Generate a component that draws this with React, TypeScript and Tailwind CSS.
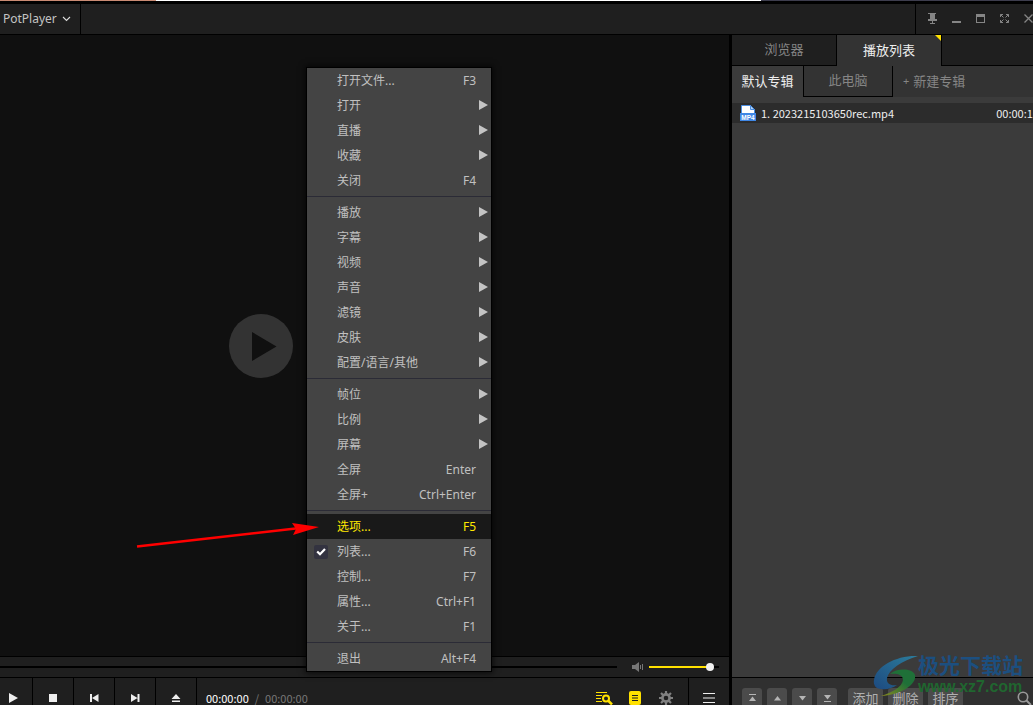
import React from "react";

type MenuItem = { label: string; keys?: string; sub?: boolean; checked?: boolean; selected?: boolean };

const groups: MenuItem[][] = [
  [
    { label: "打开文件...", keys: "F3" },
    { label: "打开", sub: true },
    { label: "直播", sub: true },
    { label: "收藏", sub: true },
    { label: "关闭", keys: "F4" },
  ],
  [
    { label: "播放", sub: true },
    { label: "字幕", sub: true },
    { label: "视频", sub: true },
    { label: "声音", sub: true },
    { label: "滤镜", sub: true },
    { label: "皮肤", sub: true },
    { label: "配置/语言/其他", sub: true },
  ],
  [
    { label: "帧位", sub: true },
    { label: "比例", sub: true },
    { label: "屏幕", sub: true },
    { label: "全屏", keys: "Enter" },
    { label: "全屏+", keys: "Ctrl+Enter" },
  ],
  [
    { label: "选项...", keys: "F5", selected: true },
    { label: "列表...", keys: "F6", checked: true },
    { label: "控制...", keys: "F7" },
    { label: "属性...", keys: "Ctrl+F1" },
    { label: "关于...", keys: "F1" },
  ],
  [{ label: "退出", keys: "Alt+F4" }],
];

function ContextMenu() {
  return (
    <div
      role="menu"
      className="absolute top-[68px] left-[307px] w-[184px] bg-[#444444] text-[#c0c0c0] shadow-[0_0_0_1px_#000,0_0_6px_2px_rgba(0,0,0,0.7)]"
    >
      {groups.map((items, g) => (
        <div key={g} role="group">
          {g > 0 && (
            <div className="flex h-[7px] items-center">
              <div className="h-px w-full bg-[#2b2b36]" />
            </div>
          )}
          {items.map((item) => (
            <button
              key={item.label}
              role="menuitem"
              className={
                "flex h-[25px] w-full items-center pr-[3px] text-left " +
                (item.selected ? "bg-[#191919] text-[#ffe800]" : "")
              }
            >
              <span className="flex w-[30px] pl-[7px]">
                {item.checked && (
                  <svg width="14" height="14" viewBox="0 0 14 14">
                    <rect width="14" height="14" rx="2" fill="#333340" />
                    <path d="M3.2 6.500l2.800 2.800L11 4.100" fill="none" stroke="#fff" strokeWidth="2.2" />
                  </svg>
                )}
              </span>
              <span className="flex-1 whitespace-nowrap">{item.label}</span>
              {item.keys && <span className="pr-3 whitespace-nowrap">{item.keys}</span>}
              {item.sub && (
                <svg width="9" height="12" viewBox="0 0 9 12">
                  <path d="M0 0v10l9-5z" fill="#c4c4c4" />
                </svg>
              )}
            </button>
          ))}
        </div>
      ))}
    </div>
  );
}

function TitleBar() {
  return (
    <header className="flex h-[31px] shrink-0 overflow-hidden border-b border-black bg-[#1f1f1f]">
      <button className="flex w-[81px] items-center gap-[5px] border-r border-black pb-px pl-[3px] text-[#c4c4c4]">
        PotPlayer
        <svg width="9" height="6" viewBox="0 0 9 6">
          <path d="M1 1l3.500 3.500L8 1" fill="none" stroke="#ddd" strokeWidth="1.100" />
        </svg>
      </button>
      <div className="flex-1" />
      <div className="-mr-2 flex w-[126px] items-center justify-between border-l border-black pr-[5px] pb-px pl-2">
        <button aria-label="置顶" className="flex w-4 justify-center">
          <svg width="10" height="12" viewBox="0 0 10 12">
            <path d="M1 0h8v1H8v5h2v2H6v2h2v1H3v-1h2V8H1V6h2V1H1z" fill="#858585" />
          </svg>
        </button>
        <button aria-label="最小化" className="flex w-4 justify-center pt-[7px]">
          <svg width="9" height="2"><rect width="9" height="2" fill="#858585" /></svg>
        </button>
        <button aria-label="最大化" className="flex w-4 justify-center">
          <svg width="9" height="9">
            <rect x=".5" y=".5" width="8" height="8" fill="none" stroke="#858585" />
            <rect width="9" height="3" fill="#858585" />
          </svg>
        </button>
        <button aria-label="全屏" className="flex w-4 justify-center">
          <svg width="9" height="9" viewBox="0 0 9 9">
            <path d="M.5 3V.5H3M6 .5h2.500V3M8.500 6v2.500H6M3 8.500H.5V6M.5 .5l3 3M8.500 .5l-3 3M8.500 8.500l-3-3M.5 8.500l3-3" fill="none" stroke="#858585" />
          </svg>
        </button>
        <button aria-label="关闭" className="flex w-4 justify-center">
          <svg width="9" height="9" viewBox="0 0 9 9">
            <path d="M.5 .5l8 8M8.500 .5l-8 8" stroke="#858585" strokeWidth="1.300" />
          </svg>
        </button>
      </div>
    </header>
  );
}

const transport = [
  { name: "播放", d: "M4 2l9 5-9 5z" },
  { name: "停止", d: "M3 3h8v8H3z" },
  { name: "上一个", d: "M3 3h2v8H3zM11.500 3v8L5 7z" },
  { name: "下一个", d: "M9.500 3h2v8h-2zM3 3v8l6.500-4z" },
  { name: "打开", d: "M7 3l4.500 5h-9zM3 9.500h8V11H3z" },
];

function Player() {
  return (
    <main className="flex min-w-0 flex-1 flex-col">
      <div className="relative flex-1 bg-[#101010]">
        <button aria-label="播放" className="absolute top-[279px] left-[229px]">
          <svg width="64" height="64" viewBox="0 0 64 64">
            <circle cx="32" cy="32" r="32" fill="#333" />
            <path d="M23 18v29l24.500-14.500z" fill="#101010" />
          </svg>
        </button>
      </div>
      <div className="flex h-[22px] shrink-0 items-center border-y border-black bg-[#1f1f1f] pr-[10px]">
        <div className="h-[2px] flex-1 bg-black" />
        <button aria-label="静音" className="mr-[5px] ml-[15px]">
          <svg width="12" height="10" viewBox="0 0 12 10">
            <path d="M0 3h3l4-3v10L3 7H0z" fill="#777" />
            <path d="M8.500 3v4M10.500 2v6" stroke="#777" />
          </svg>
        </button>
        <div className="relative flex h-2 w-[70px] items-center bg-[linear-gradient(#000,#000)] bg-[length:100%_2px] bg-center bg-no-repeat">
          <div className="h-[2px] w-[60px] bg-[#ffe100]" />
          <div className="-ml-[3px] size-2 shrink-0 rounded-full bg-[#f0f0f0]" />
        </div>
      </div>
      <div className="h-[27px] shrink-0 overflow-hidden bg-[#1f1f1f]">
        <div className="flex h-10">
          <div className="-ml-2 flex">
            {transport.map((t) => (
              <button key={t.name} aria-label={t.name} className="flex w-[41px] items-center justify-center border-r border-black">
                <svg width="14" height="14" viewBox="0 0 14 14">
                  <path d={t.d} fill="#eee" />
                </svg>
              </button>
            ))}
          </div>
          <div className="flex flex-1 items-center gap-[6px] pl-[9px] font-['Noto_Sans_CJK_SC',sans-serif] text-[11px] leading-3">
            <span className="text-white">00:00:00</span>
            <span className="text-[#777]">/</span>
            <span className="text-[#777]">00:00:00</span>
          </div>
          <div className="flex items-center pr-[15px]">
            <button aria-label="搜索列表" className="mr-4">
              <svg width="17" height="16" viewBox="0 0 17 16">
                <path d="M0 2.500h11M0 5.500h6M0 8.500h5M0 11.500h6" stroke="#ffe100" strokeWidth="1.100" />
                <circle cx="10" cy="8.500" r="3" fill="none" stroke="#ffe100" strokeWidth="2" />
                <path d="M12 10.500l4 4" stroke="#ffe100" strokeWidth="2.500" />
              </svg>
            </button>
            <button aria-label="播放列表" className="mr-[18px]">
              <svg width="12" height="14" viewBox="0 0 12 14">
                <rect width="12" height="14" rx="2" fill="#ffe100" />
                <path d="M3 4.500h6M3 7h6M3 9.500h6" stroke="#1f1f1f" strokeWidth="1.200" />
              </svg>
            </button>
            <button aria-label="设置">
              <svg width="14" height="14" viewBox="0 0 14 14">
                <circle cx="7" cy="7" r="3.600" fill="none" stroke="#808080" strokeWidth="2.600" />
                <path d="M7 0v3M7 11v3M0 7h3M11 7h3M2 2l2 2M10 10l2 2M2 12l2-2M10 4l2-2" stroke="#808080" strokeWidth="2.200" />
              </svg>
            </button>
          </div>
          <button aria-label="菜单" className="flex w-[41px] items-center justify-center border-l border-black">
            <svg width="12" height="10" viewBox="0 0 12 10">
              <path d="M0 .5h12M0 5h12M0 9.500h12" stroke="#eee" />
            </svg>
          </button>
        </div>
      </div>
    </main>
  );
}

const moves = [
  { name: "移到顶部", d: "M2 1h7v1H2zM5.500 3.500L9 8H2z" },
  { name: "上移", d: "M5.500 3L9 7.500H2z" },
  { name: "下移", d: "M5.500 7.500L9 3H2z" },
  { name: "移到底部", d: "M2 8h7v1H2zM5.500 6.500L9 2H2z" },
];

function Playlist() {
  return (
    <aside className="relative flex w-[304px] shrink-0 flex-col overflow-hidden border-l-3 border-black bg-[#3b3b3b]">
      <div className="flex h-[31px] shrink-0 bg-[#1f1f1f] text-[13px]">
        <button className="w-[105px] border-r border-b border-black text-[#858585]">浏览器</button>
        <button className="relative w-[105px] border-r border-black bg-[#333] text-[#eee]">
          播放列表
          <svg className="absolute top-0 right-0" width="6" height="6">
            <path d="M0 0h6v6z" fill="#ffe100" />
          </svg>
        </button>
        <div className="flex-1 border-b border-black" />
      </div>
      <div className="flex h-[31px] shrink-0 bg-[#333] text-[13px] text-[#858585]">
        <button className="w-[72px] border-r border-black bg-[#3b3b3b] text-[#eee]">默认专辑</button>
        <button className="w-[89px] border-r border-b border-black">此电脑</button>
        <button className="flex flex-1 items-center gap-1 pl-[10px]">
          <span className="text-[11px]">+</span>新建专辑
        </button>
      </div>
      <ul className="min-h-0 flex-1 pt-[6px]">
        <li className="flex h-5 items-center bg-[#2c2c2c] font-['Noto_Sans_CJK_SC',sans-serif] text-[11px] whitespace-nowrap text-[#eee]">
          <svg className="mr-[5px] ml-2 shrink-0" width="16" height="16" viewBox="0 0 16 16">
            <path d="M1.500 .5h9l4 4v11h-13z" fill="#fff" stroke="#4a8de0" />
            <path d="M10.500 .5v4h4z" fill="#b6d4f5" stroke="#4a8de0" />
            <rect y="8" width="16" height="8" fill="#3f87e5" />
            <text x="8" y="14.500" textAnchor="middle" fontSize="6.500" fontWeight="bold" fill="#fff" fontFamily="Liberation Sans">MP4</text>
          </svg>
          <span className="flex-1">1. 2023215103650rec.mp4</span>
          <span className="-mr-[6px] shrink-0">00:00:10</span>
        </li>
      </ul>
      <div className="h-[28px] shrink-0 overflow-hidden border-t border-black bg-[#303030]">
        <div className="flex h-10 items-center gap-[5px] pl-[10px]">
          {moves.map((m) => (
            <button key={m.name} aria-label={m.name} className="flex size-5 items-center justify-center rounded-[3px] bg-[#4b4b4b]">
              <svg width="11" height="10" viewBox="0 0 11 10">
                <path d={m.d} fill="#b5b5b5" />
              </svg>
            </button>
          ))}
          <div className="ml-[6px] flex gap-[5px] text-[13px] text-[#b0b0b0]">
            <button className="h-5 w-[35px] rounded-[3px] bg-[#4b4b4b] leading-[18px]">添加</button>
            <button className="h-5 w-[35px] rounded-[3px] bg-[#4b4b4b] leading-[18px]">删除</button>
            <button className="h-5 w-[35px] rounded-[3px] bg-[#4b4b4b] leading-[18px]">排序</button>
          </div>
          <button aria-label="搜索" className="mr-px ml-auto">
            <svg width="15" height="15" viewBox="0 0 15 15">
              <circle cx="6" cy="6" r="4.700" fill="none" stroke="#999" strokeWidth="1.600" />
              <path d="M9.500 9.500L14 14" stroke="#999" strokeWidth="2" />
            </svg>
          </button>
        </div>
      </div>
      <Watermark />
    </aside>
  );
}

function Watermark() {
  return (
    <div className="pointer-events-none absolute right-[10px] bottom-[7px] flex items-center">
      <svg width="45" height="44" viewBox="0 0 45 44">
        <defs>
          <linearGradient id="swoosh" x1="0" y1="1" x2="1" y2="0">
            <stop offset="0" stopColor="#1d4a80" />
            <stop offset="1" stopColor="#2c7d9c" />
          </linearGradient>
          <linearGradient id="leaf" x1="0" y1="1" x2="1" y2="0">
            <stop offset="0" stopColor="#8a8a20" />
            <stop offset=".6" stopColor="#1f7038" />
          </linearGradient>
        </defs>
        <path d="M45 2C24 1 3 12 1 26c-1 5 2 9 7 9 5 1 12-1 16-4-6 1-11-1-10-7C16 15 29 7 45 2z" fill="url(#swoosh)" />
        <path d="M17 20c7-6 22-6 25 1 2 10-15 20-34 21 12-4 21-9 22-16 0-6-7-7-13-6z" fill="url(#leaf)" />
      </svg>
      <div className="w-[105px] whitespace-nowrap font-bold">
        <div className="text-[21px] leading-[22px] text-[#1c4f80]">极光下载站</div>
        <div className="font-['Liberation_Sans',sans-serif] text-base leading-[22px] text-[#20662f]">www.xz7.com</div>
      </div>
    </div>
  );
}

export default function App() {
  return (
    <div className="relative flex h-screen flex-col overflow-hidden bg-black font-['Noto_Sans','Noto_Sans_CJK_SC',sans-serif] text-xs">
      <div className="mb-[3px] flex h-px shrink-0">
        <div className="w-[156px] bg-[#c98b74]" />
        <div className="w-[605px] bg-white" />
        <div className="flex-1 bg-[#3d3d4d]" />
      </div>
      <TitleBar />
      <div className="flex min-h-0 flex-1">
        <Player />
        <Playlist />
      </div>
      <ContextMenu />
      <svg className="pointer-events-none absolute top-[515px] left-[130px]" width="195" height="40" viewBox="0 0 195 40">
        <path d="M7 31.500L170 13" stroke="#f00" strokeWidth="2.500" />
        <path d="M162 8l27 4-26 8 3-6z" fill="#f00" />
      </svg>
    </div>
  );
}
